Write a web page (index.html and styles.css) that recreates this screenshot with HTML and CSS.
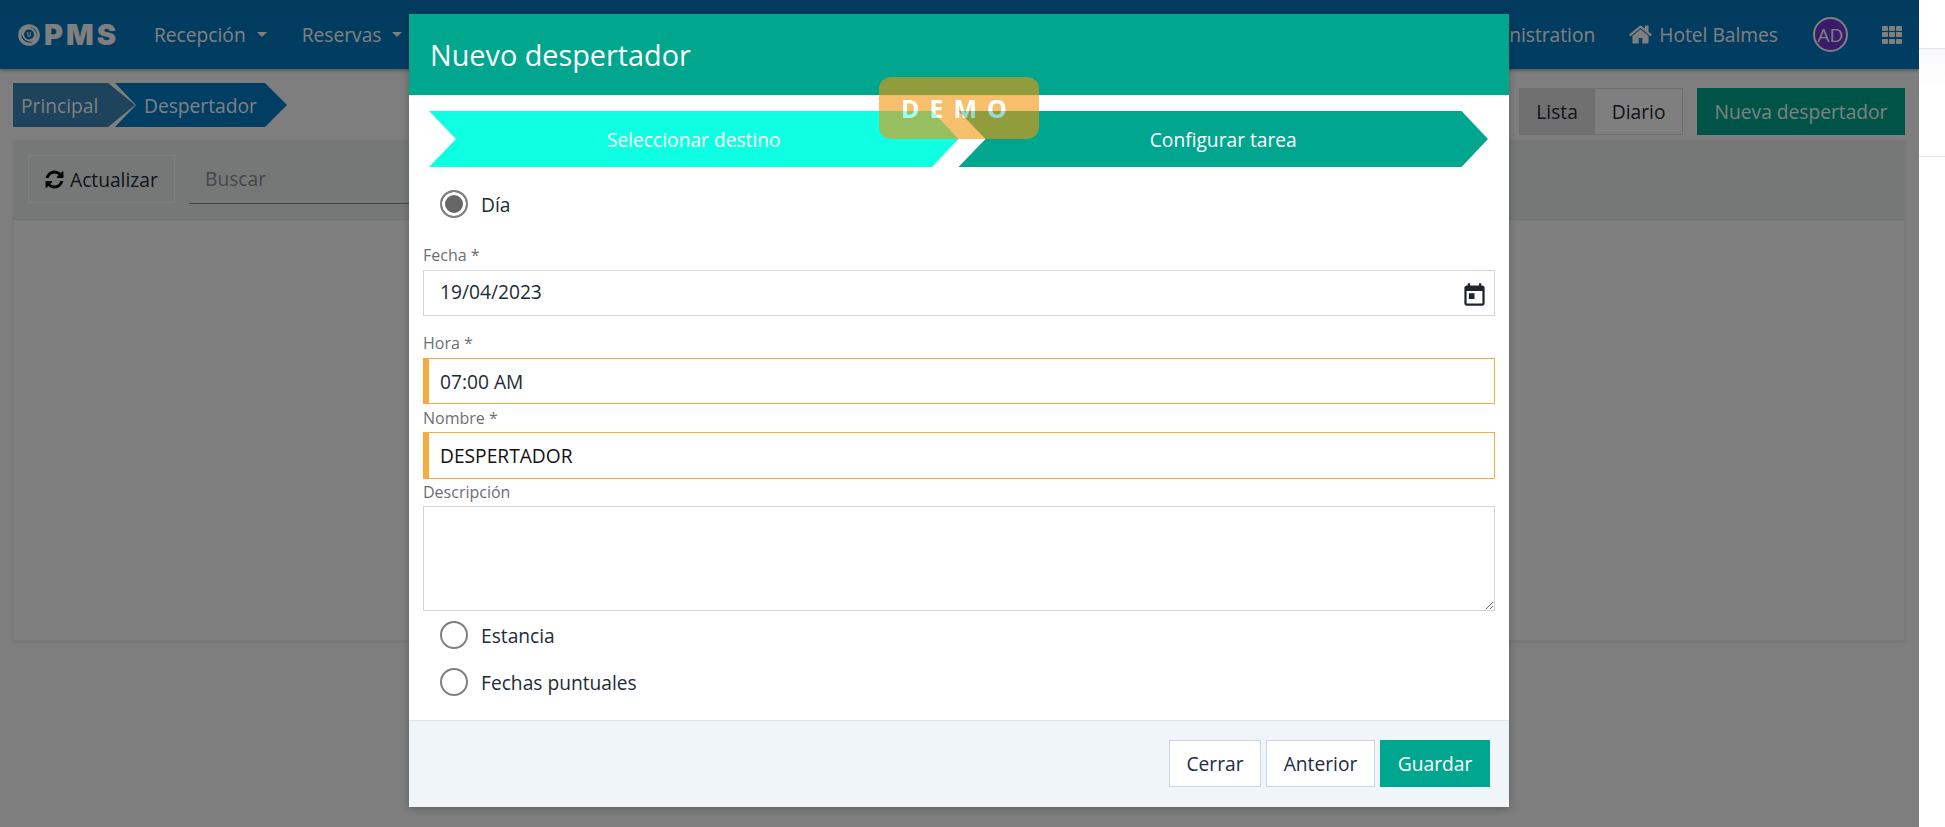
FILE: index.html
```html
<!DOCTYPE html>
<html lang="es">
<head>
<meta charset="utf-8">
<title>Despertador</title>
<link rel="stylesheet" href="styles.css">
</head>
<body>
<div class="page">
  <div class="app">
    <header class="navbar">
      <div class="logo">
        <svg class="logo-mark" viewBox="0 0 22 22"><circle cx="11" cy="11" r="10.8" fill="#fff"/><path d="M12 3.2a7.8 7.8 0 0 1 6.6 10.6A9 9 0 0 0 12 3.2z" fill="#0476bc"/><path d="M3.6 9.5a7.8 7.8 0 0 0 11.9 7.9A9.5 9.5 0 0 1 3.6 9.500z" fill="#0476bc"/><circle cx="11" cy="10.5" r="5" fill="#0476bc"/><path d="M9.2 8v3a1.8 1.800 0 0 0 3.600 0V8h-1v3a.8.8 0 0 1-1.600 0V8z" fill="#fff"/></svg>
        <span class="logo-text">PMS</span>
      </div>
      <nav class="menu">
        <a class="menu-item caret">Recepción</a>
        <a class="menu-item caret">Reservas</a>
      </nav>
      <div class="nav-right">
        <a class="nav-link">Administration</a>
        <a class="nav-link hotel"><svg class="icon-home" viewBox="0 0 1792 1792"><path fill="currentColor" d="M1472 992v480q0 26-19 45t-45 19h-384v-384h-256v384h-384q-26 0-45-19t-19-45v-480q0-1 .5-3t.5-3l575-474 575 474q1 2 1 6zm223-69l-62 74q-8 9-21 11h-3q-13 0-21-7l-692-577-692 577q-12 8-24 7-13-2-21-11l-62-74q-8-10-7-23.5t11-21.5l719-599q32-26 76-26t76 26l244 204v-195q0-14 9-23t23-9h192q14 0 23 9t9 23v408l219 182q10 8 11 21.5t-7 23.5z"/></svg>Hotel Balmes</a>
        <span class="avatar">AD</span>
        <span class="apps"><i></i><i></i><i></i><i></i><i></i><i></i><i></i><i></i><i></i></span>
      </div>
    </header>
    <div class="subbar">
      <div class="crumbs">
        <a class="crumb first">Principal</a>
        <a class="crumb second">Despertador</a>
      </div>
      <div class="views">
        <div class="btn-group"><button class="btn active">Lista</button><button class="btn">Diario</button></div>
        <button class="btn-new">Nueva despertador</button>
      </div>
    </div>
    <section class="card">
      <div class="card-head">
        <button class="btn refresh"><svg class="icon-refresh" viewBox="0 0 1792 1792"><path fill="currentColor" d="M1639 1056q0 5-1 7-64 268-268 434.5t-478 166.5q-146 0-282.5-55t-243.5-157l-129 129q-19 19-45 19t-45-19-19-45v-448q0-26 19-45t45-19h448q26 0 45 19t19 45-19 45l-137 137q71 66 161 102t187 36q134 0 250-65t186-179q11-17 53-117 8-23 30-23h192q13 0 22.5 9.5t9.5 22.5zm25-800v448q0 26-19 45t-45 19h-448q-26 0-45-19t-19-45 19-45l138-138q-148-137-349-137-134 0-250 65t-186 179q-11 17-53 117-8 23-30 23h-199q-13 0-22.5-9.5t-9.5-22.5v-7q65-268 270-434.5t480-166.5q146 0 284 55.5t245 156.5l130-129q19-19 45-19t45 19 19 45z"/></svg>Actualizar</button>
        <div class="search">Buscar</div>
      </div>
    </section>
    <div class="overlay"></div>
    <div class="modal">
      <div class="modal-head">Nuevo despertador</div>
      <div class="steps">
        <div class="step done">Seleccionar destino</div>
        <div class="step current">Configurar tarea</div>
      </div>
      <div class="modal-body">
        <label class="radio first-radio"><input type="radio" name="tipo" checked><span>Día</span></label>
        <div class="field gap-after">
          <label class="field-label">Fecha *</label>
          <div class="date-wrap">
            <input class="input date" type="text" value="19/04/2023">
            <svg class="icon-cal" viewBox="0 0 24 24"><path fill="currentColor" d="M19 3h-1V1h-2v2H8V1H6v2H5c-1.11 0-1.99.9-1.99 2L3 19c0 1.1.89 2 2 2h14c1.1 0 2-.9 2-2V5c0-1.1-.9-2-2-2zm0 16H5V8h14v11zM7 10h5v5H7z"/></svg>
          </div>
        </div>
        <div class="field small-gap">
          <label class="field-label">Hora *</label>
          <input class="input required time" type="text" value="07:00 AM">
        </div>
        <div class="field tight name-field">
          <label class="field-label">Nombre *</label>
          <input class="input required name" type="text" value="DESPERTADOR">
        </div>
        <div class="field tight">
          <label class="field-label">Descripción</label>
          <textarea class="input area"></textarea>
        </div>
        <label class="radio"><input type="radio" name="tipo"><span>Estancia</span></label>
        <label class="radio"><input type="radio" name="tipo"><span>Fechas puntuales</span></label>
      </div>
      <div class="modal-foot">
        <button class="btn-foot">Cerrar</button>
        <button class="btn-foot">Anterior</button>
        <button class="btn-foot save">Guardar</button>
      </div>
    </div>
    <div class="demo">DEMO</div>
  </div>
  <aside class="strip"><div class="strip-box"></div></aside>
</div>
</body>
</html>
```
FILE: styles.css
```css
* { box-sizing: border-box; }
html, body { margin: 0; height: 827px; overflow: hidden; background: #fff; }
body { font-family: "Open Sans", "Liberation Sans", sans-serif; font-size: 19.2px; color: #212b36; }
.page { display: flex; height: 827px; }
.app { position: relative; width: 1919px; flex: none; height: 827px; background: #fcfdff; overflow: hidden; }
.strip { flex: 1; padding-top: 48px; background: #fff; }
.strip-box { height: 109px; border-top: 1px solid #e4e4e6; border-bottom: 1px solid #e4e4e6; background: linear-gradient(#f9f9fb, #fff 40px); }

.navbar { height: 69px; display: flex; align-items: center; padding: 0 17px 0 18px; background: linear-gradient(#0476bc, #037cc6); color: #fff; box-shadow: 0 1px 4px rgba(0,0,0,.4); position: relative; }
.logo { display: flex; align-items: center; gap: 4px; width: 136px; }
.logo-mark { width: 22px; height: 22px; }
.logo-text { font-family: Inter, "Open Sans", sans-serif; font-weight: 900; font-size: 29px; line-height: 1; letter-spacing: 3px; }
.menu { display: flex; gap: 35px; }
.menu-item { display: flex; align-items: center; }
.caret::after { content: ""; margin-left: 11px; border: 5px solid transparent; border-top-color: #fff; border-bottom: 0; }
.nav-right { margin-left: auto; display: flex; align-items: center; }
.nav-link { display: flex; align-items: center; }
.hotel { margin-left: 33px; gap: 6px; }
.icon-home { width: 25px; height: 25px; }
.avatar { margin-left: 35px; width: 35px; height: 35px; border-radius: 50%; background: #7238d8; border: 2px solid #fff; display: flex; align-items: center; justify-content: center; font-size: 19px; }
.apps { margin-left: 34px; display: grid; grid-template-columns: repeat(3, 6px); grid-auto-rows: 5px; gap: 1.5px 1px; }
.apps i { background: #fff; border-radius: 1px; }

.subbar { height: 71px; display: flex; align-items: flex-start; justify-content: space-between; padding: 14px 14px 0 13px; }
.crumbs { display: flex; }
.crumb { height: 44px; display: flex; align-items: center; color: #fff; }
.first { width: 122px; padding-left: 8px; background: #3a86ba; clip-path: polygon(0 0, 95px 0, 122px 50%, 95px 100%, 0 100%); }
.second { width: 172px; margin-left: -20px; padding-left: 29px; background: #007cc8; clip-path: polygon(0 0, 150px 0, 100% 50%, 150px 100%, 0 100%, 21px 50%); }
.views { display: flex; gap: 14px; margin-top: 5px; }
.btn-group { display: flex; }
.btn { font: inherit; color: #212b36; background: #fff; border: 1px solid #dcdcdc; padding: 0 16.5px; height: 47px; }
.btn.active { background: #e0e0e0; }
.btn-group .btn + .btn { margin-left: -1px; }
.btn-new { font: inherit; color: #fff; background: #00a88f; border: 0; height: 47px; width: 208px; }

.card { margin: 0 14px 0 13px; height: 501px; border: 1px solid #f0f3f3; background: #fff; box-shadow: 0 1px 3px rgba(0,0,0,.1); }
.card-head { height: 79px; display: flex; align-items: flex-start; gap: 14px; padding: 14px 14px 0; background: #ecf1f1; border-bottom: 1px solid #dfe3e6; }
.refresh { display: flex; align-items: center; gap: 5px; width: 147px; height: 48px; padding: 0 0 0 15px; background: transparent; border-color: #fff; }
.icon-refresh { width: 21px; height: 21px; color: #000; }
.search { width: 420px; height: 49px; line-height: 48px; padding-left: 16px; color: #8b8f93; border-bottom: 1px solid #888; }

.overlay { position: absolute; inset: 0; background: rgba(0,0,0,.5); }

.modal { position: absolute; left: 409px; top: 14px; width: 1100px; height: 793px; background: #fff; display: flex; flex-direction: column; box-shadow: 0 2px 8px rgba(0,0,0,.25); }
.modal-head { height: 82px; flex: none; display: flex; align-items: center; padding-left: 21px; background: #00a78e; color: #fff; font-size: 28.8px; border-bottom: 1px solid #dfe; }
.steps { display: flex; padding: 15px 21px 0 20px; flex: none; }
.step { flex: 1; height: 56px; display: flex; align-items: center; justify-content: center; color: #fff; }
.done { background: #0fffe3; clip-path: polygon(0 0, 503px 0, 100% 50%, 503px 100%, 0 100%, 27px 50%); }
.current { background: #00a78e; clip-path: polygon(0 0, 503px 0, 100% 50%, 503px 100%, 0 100%, 27px 50%); }
.modal-body { flex: 1; padding: 23px 14px 0; display: flex; flex-direction: column; }
.radio { display: flex; align-items: center; gap: 13px; height: 28px; padding-left: 17px; }
.radio input { appearance: none; margin: 0; width: 28px; height: 28px; border-radius: 50%; border: 2px solid #808080; background: #fff; }
.radio input:checked { background: #666; box-shadow: inset 0 0 0 3px #fff; }
.first-radio { margin-bottom: 27px; }
.radio + .radio { margin-top: 19px; }
.field + .radio { margin-top: 10px; }
.field { display: flex; flex-direction: column; }
.gap-after { margin-bottom: 17px; }
.small-gap { margin-bottom: 4px; }
.name-field { margin-bottom: 3px; }
.field-label { font-size: 16px; line-height: 20px; margin-bottom: 5px; color: #6c6f73; }
.tight .field-label { margin-bottom: 4px; }
.date-wrap { position: relative; display: flex; }
.input { font: inherit; color: #212b36; width: 100%; height: 46px; padding: 0 16px; border: 1px solid #d2d4d6; border-radius: 0; background: #fff; outline: 0; }
.date { padding-bottom: 3px; }
.required { border-color: #f7ab3c; border-left: 6px solid #f7ab3c; padding-left: 11px; }
.name { height: 47px; color: #111; }
.area { display: block; height: 105px; padding-top: 8px; resize: vertical; border-color: #cfd4dc; }
.icon-cal { position: absolute; right: 7px; top: 12px; width: 27px; height: 27px; color: #1f2430; }

.modal-foot { height: 87px; flex: none; display: flex; justify-content: flex-end; gap: 5px; padding: 19px 19px 0 0; background: #f0f5fa; border-top: 1px solid #dfe5ec; }
.btn-foot { font: inherit; height: 47px; color: #212b45; background: #fff; border: 1px solid #cdd5e0; width: 92px; }
.btn-foot:nth-child(2) { width: 109px; }
.save { width: 110px; background: #00a78e; border: 0; color: #fff; }

.demo { position: absolute; left: 879px; top: 77px; width: 160px; height: 62px; border-radius: 12px; background: #f29509; opacity: .6; color: #fff; font-weight: 700; font-size: 25px; letter-spacing: 10px; display: flex; align-items: center; justify-content: center; }
```
